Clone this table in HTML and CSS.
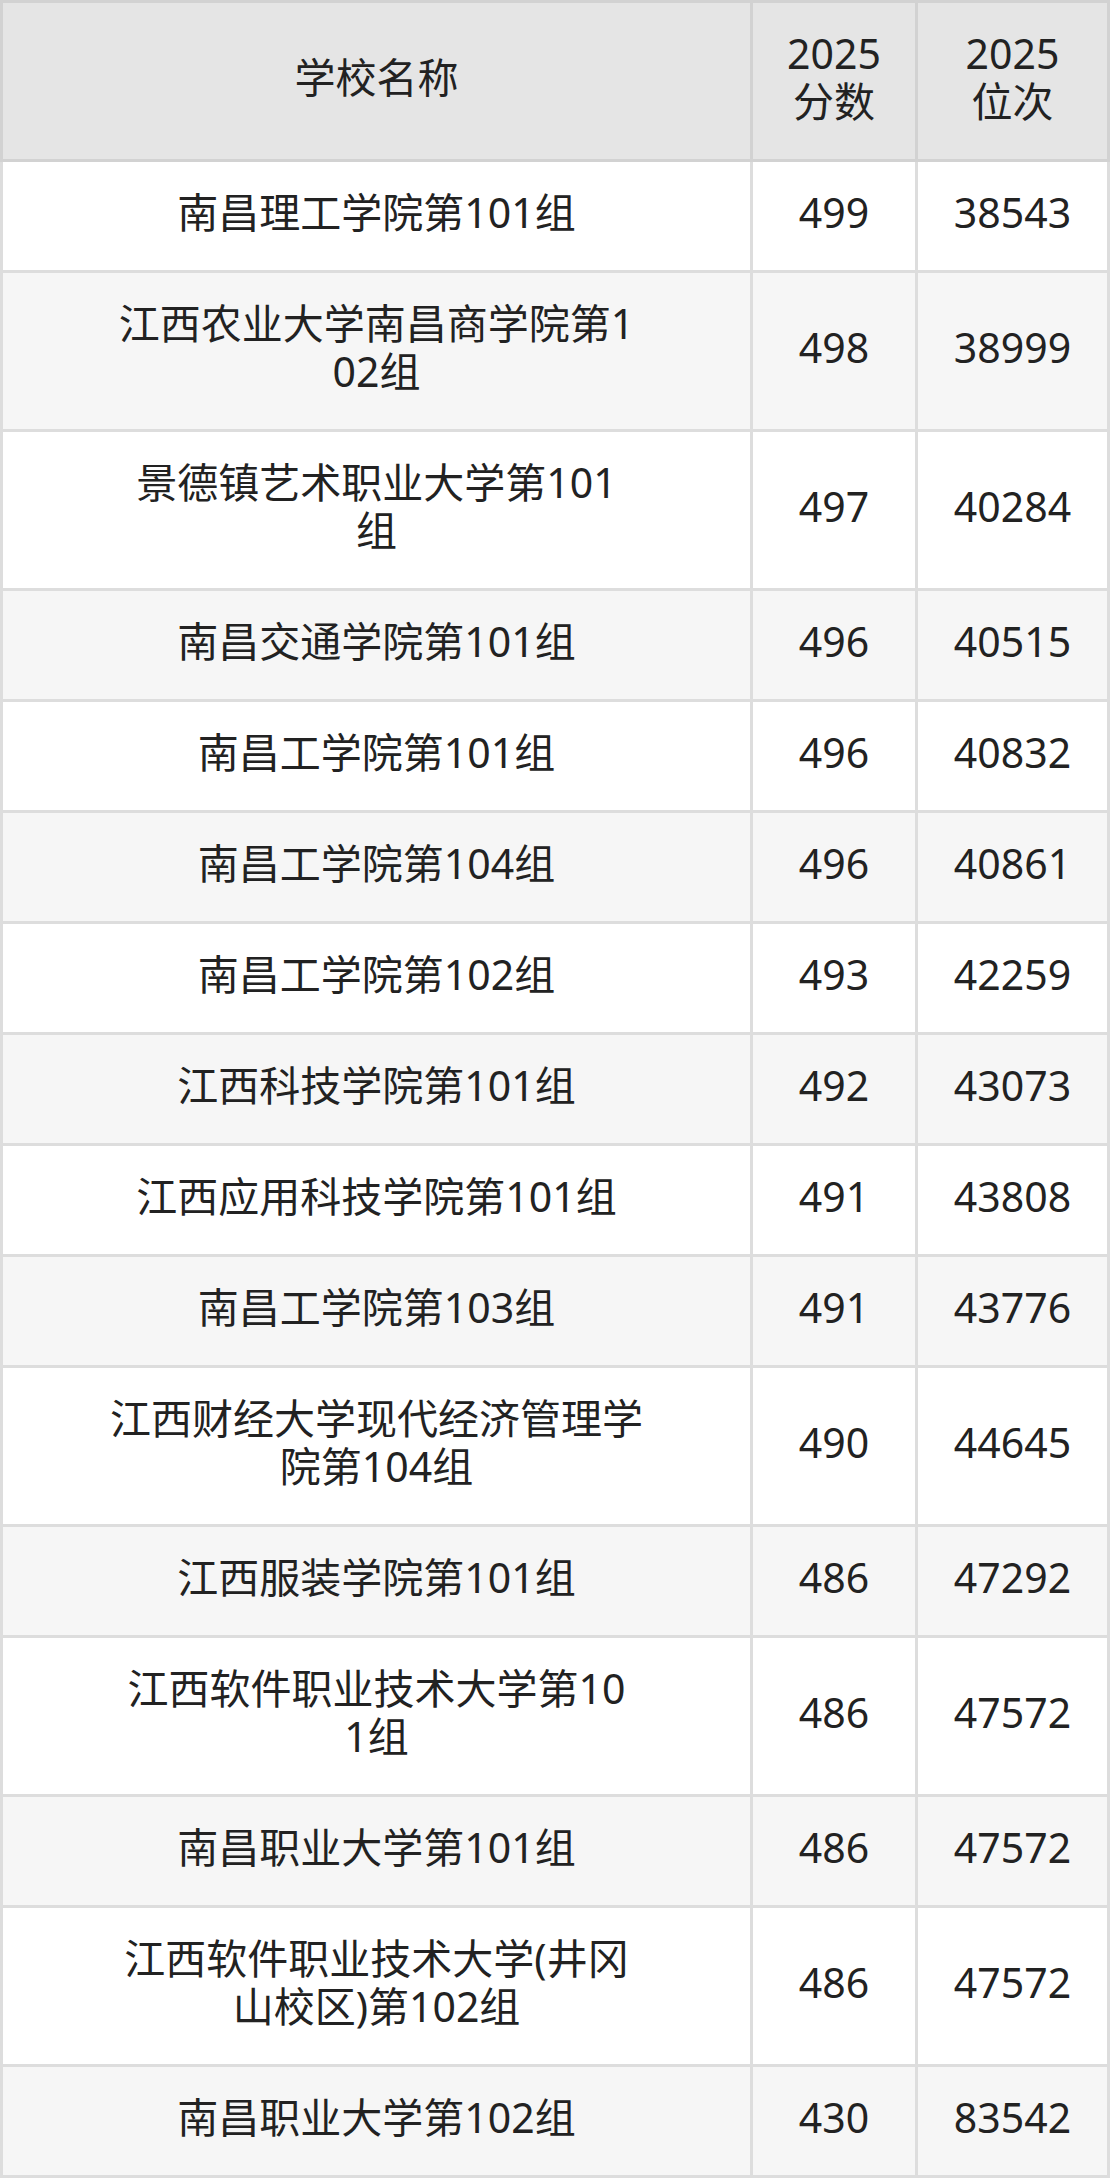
FILE: index.html
```html
<!DOCTYPE html>
<html lang="zh-CN">
<head>
<meta charset="utf-8">
<title>分数位次</title>
<link rel="stylesheet" href="styles.css">
</head>
<body>
<table class="score-table">
  <thead>
    <tr>
      <th class="col-name">学校名称</th>
      <th class="col-score">2025<br>分数</th>
      <th class="col-rank">2025<br>位次</th>
    </tr>
  </thead>
  <tbody>
    <tr><td>南昌理工学院第101组</td><td>499</td><td>38543</td></tr>
    <tr><td>江西农业大学南昌商学院第1<br>02组</td><td>498</td><td>38999</td></tr>
    <tr><td>景德镇艺术职业大学第101<br>组</td><td>497</td><td>40284</td></tr>
    <tr><td>南昌交通学院第101组</td><td>496</td><td>40515</td></tr>
    <tr><td>南昌工学院第101组</td><td>496</td><td>40832</td></tr>
    <tr><td>南昌工学院第104组</td><td>496</td><td>40861</td></tr>
    <tr><td>南昌工学院第102组</td><td>493</td><td>42259</td></tr>
    <tr><td>江西科技学院第101组</td><td>492</td><td>43073</td></tr>
    <tr><td>江西应用科技学院第101组</td><td>491</td><td>43808</td></tr>
    <tr><td>南昌工学院第103组</td><td>491</td><td>43776</td></tr>
    <tr><td>江西财经大学现代经济管理学<br>院第104组</td><td>490</td><td>44645</td></tr>
    <tr><td>江西服装学院第101组</td><td>486</td><td>47292</td></tr>
    <tr><td>江西软件职业技术大学第10<br>1组</td><td>486</td><td>47572</td></tr>
    <tr><td>南昌职业大学第101组</td><td>486</td><td>47572</td></tr>
    <tr><td>江西软件职业技术大学(井冈<br>山校区)第102组</td><td>486</td><td>47572</td></tr>
    <tr><td>南昌职业大学第102组</td><td>430</td><td>83542</td></tr>
  </tbody>
</table>
</body>
</html>
```
FILE: styles.css
```css
html, body {
  margin: 0;
  padding: 0;
  background: #ffffff;
}

.score-table {
  width: 1110px;
  table-layout: fixed;
  border-collapse: separate;
  border-spacing: 0;
  font-family: "Noto Sans", "Noto Sans CJK SC", sans-serif;
  font-size: 41px;
  line-height: 48px;
  color: #222222;
}

.score-table th,
.score-table td {
  box-sizing: border-box;
  padding: 26px 6px 34px;
  text-align: center;
  vertical-align: middle;
  font-weight: normal;
  border-right: 3px solid #dddddd;
  border-bottom: 3px solid #dddddd;
  white-space: nowrap;
}

.score-table th:first-child,
.score-table td:first-child {
  border-left: 3px solid #dddddd;
}

.score-table th {
  background: #e5e5e5;
  border-color: #d2d2d2;
  border-top: 3px solid #d2d2d2;
}

.score-table th:first-child {
  border-left-color: #d2d2d2;
}

.col-name { width: 753px; }
.col-score { width: 165px; }
.col-rank { width: 192px; }

.score-table tbody tr:nth-child(odd) td {
  background: #ffffff;
}

.score-table tbody tr:nth-child(even) td {
  background: #f6f6f6;
}
```
